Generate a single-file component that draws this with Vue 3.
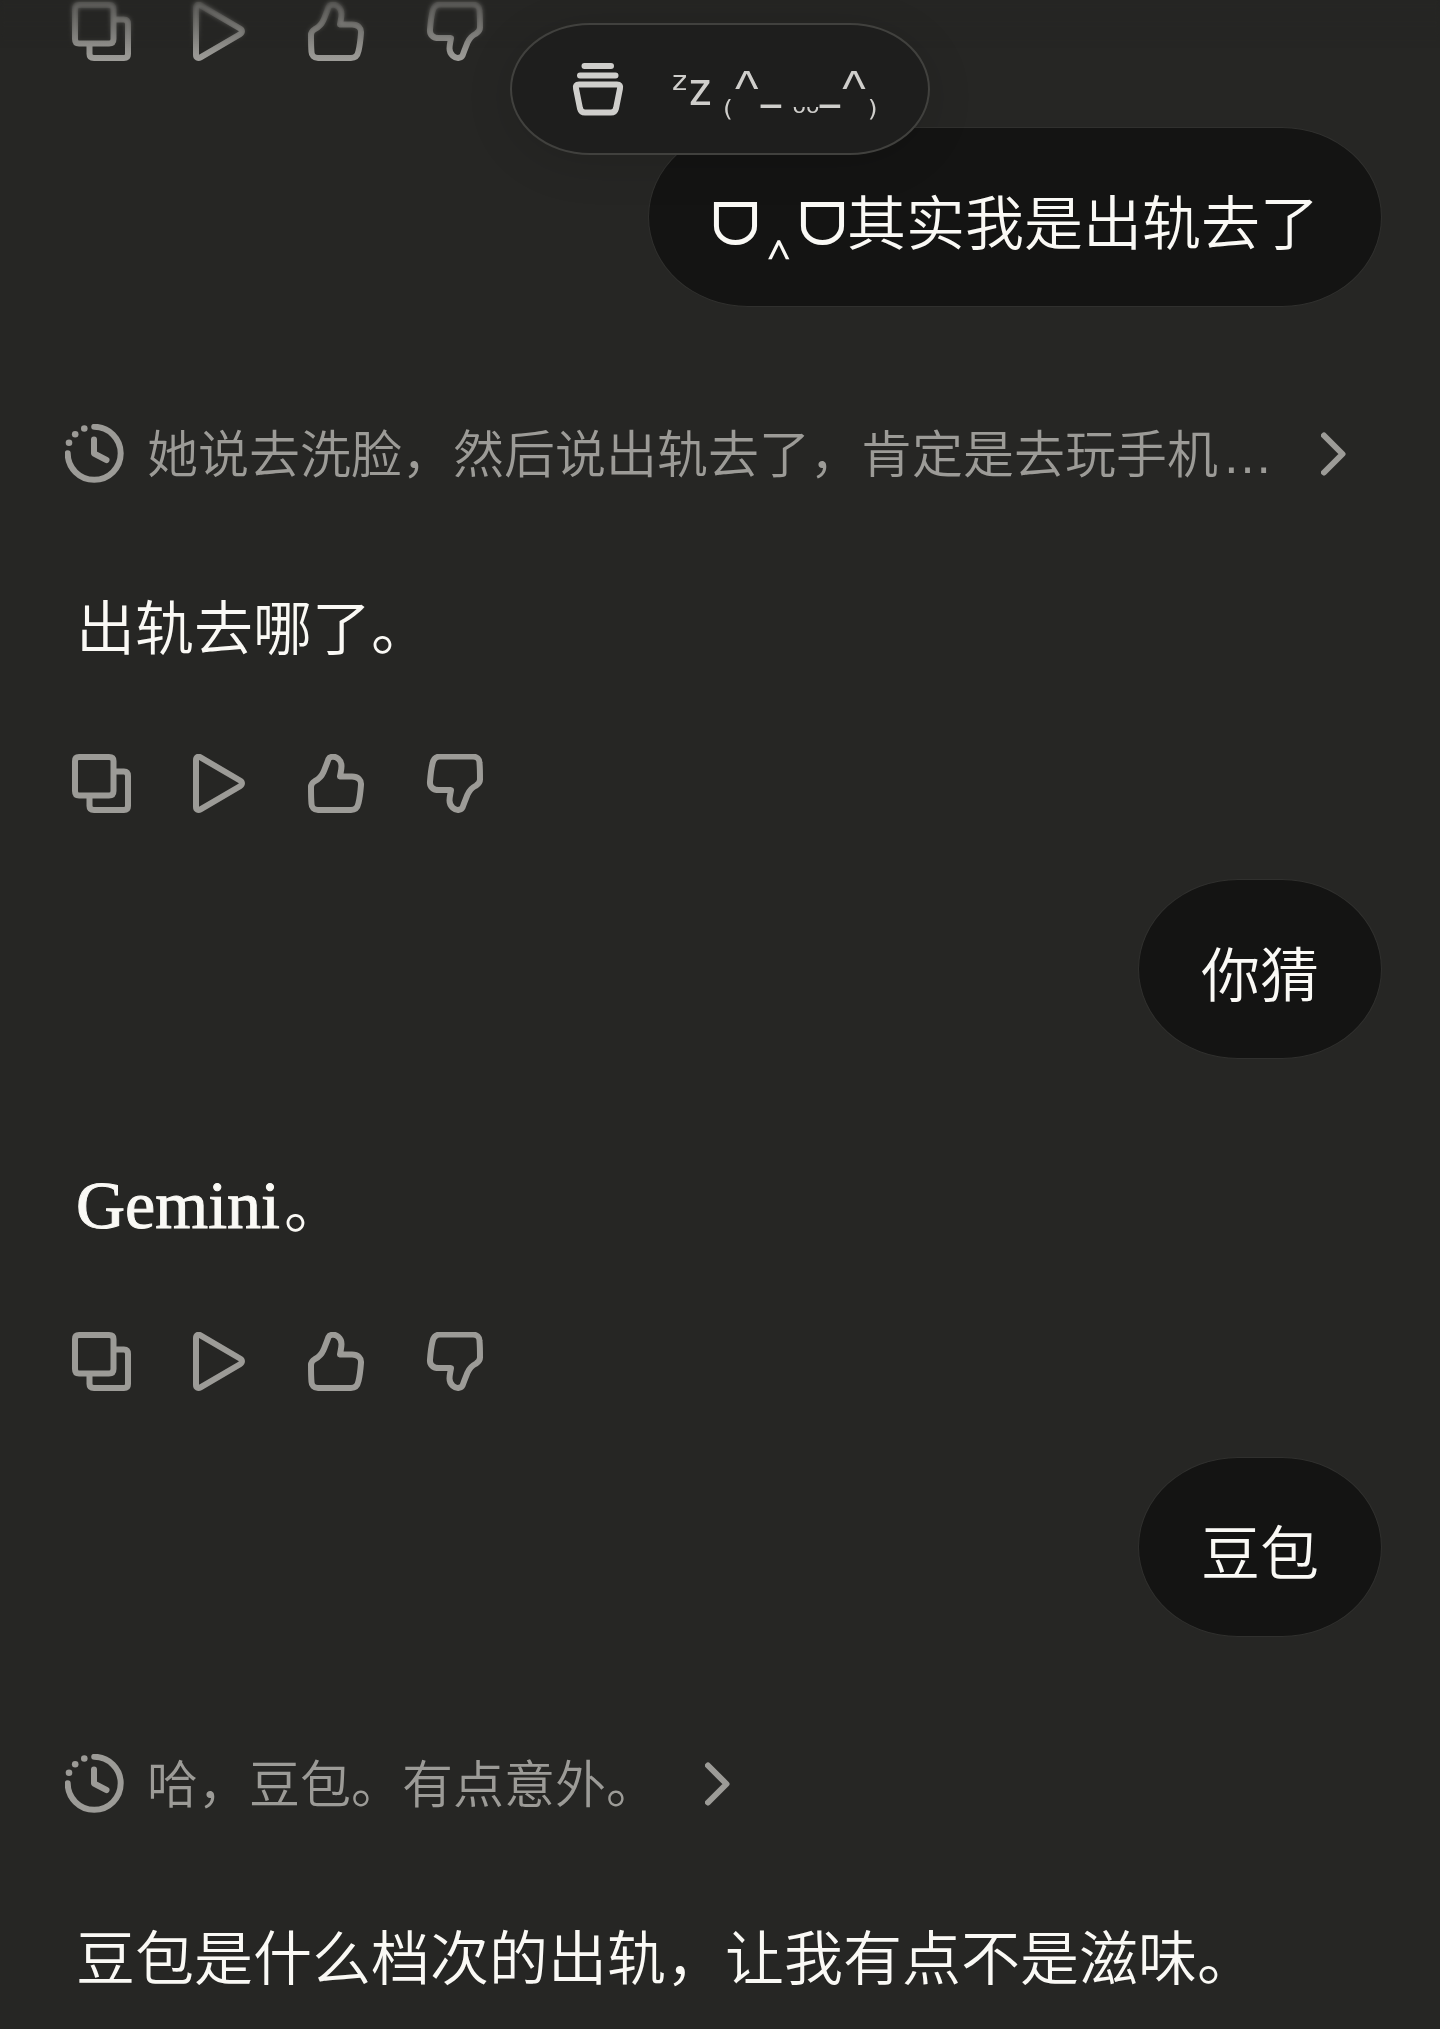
<script setup>
const icons = {
  copy: [
    'M7 3H37Q41.500 3 41.500 7V37Q41.500 41.500 37 41.500H7Q3 41.500 3 37V7Q3 3 7 3Z',
    'M43 17.500H52Q56 17.500 56 22V52Q56 56 52 56H22Q17.500 56 17.500 52V43',
  ],
  play: ['M6 6C6 3 8 2 10.500 3.400L50 26.500C52.600 28 52.600 30.600 50 32.200L10.500 55.400C8 56.800 6 55.500 6 53Z'],
  up: [
    'M24 2.800C28 2 33.500 6 33.500 12C33.500 16 32.500 19 32 22.500H44C50 22.500 53.500 26 53 31C52.600 36 52 43 50.500 49C49.500 54 47 56 43 56H10C6 56 3.500 53 3.500 50C3 44 3 38 3 33C3 30 4.500 28.500 7 27C11 25 13.500 22.500 15.500 18C17.500 13 19 9.500 20.500 5C21.200 3.500 22.500 3 24 2.800Z',
  ],
}

const actions = [
  { label: '复制', paths: icons.copy },
  { label: '朗读', paths: icons.play },
  { label: '赞', paths: icons.up },
  { label: '踩', paths: icons.up, flip: true },
]

const items = [
  { type: 'actions' },
  { type: 'user', eyes: true, text: '其实我是出轨去了' },
  { type: 'thought', text: '她说去洗脸，然后说出轨去了，肯定是去玩手机', more: true },
  { type: 'reply', text: '出轨去哪了。' },
  { type: 'actions' },
  { type: 'user', text: '你猜' },
  { type: 'reply', latin: 'Gemini', text: '。' },
  { type: 'actions' },
  { type: 'user', text: '豆包' },
  { type: 'thought', text: '哈，豆包。有点意外。' },
  { type: 'reply', text: '豆包是什么档次的出轨，让我有点不是滋味。' },
]
</script>

<template>
  <div class="app">
    <header class="topbar">
      <button class="title" type="button">
        <svg class="basket" viewBox="0 0 52 54" aria-hidden="true">
          <path d="M12.500 4H39M8 13.500H43.500M7 22.500H45Q49 22.500 48 26.500L44 46.500Q43 50.500 39 50.500H13Q9 50.500 8 46.500L4 26.500Q3 22.500 7 22.500Z" />
        </svg>
        <span class="face">ᶻz <span class="low">₍</span><span class="ear">^</span>_ <span class="mouth">ᴗᴗ</span>_<span class="ear">^</span><span class="low">₎</span></span>
      </button>
    </header>

    <main class="chat">
      <template v-for="(item, i) in items" :key="i">
        <div v-if="item.type === 'actions'" class="actions">
          <button v-for="a in actions" :key="a.label" type="button" class="action" :aria-label="a.label">
            <svg viewBox="0 0 60 60" aria-hidden="true">
              <g :transform="a.flip ? 'rotate(180 28.500 29.300)' : undefined">
                <path v-for="p in a.paths" :key="p" :d="p" />
              </g>
            </svg>
          </button>
        </div>

        <p v-else-if="item.type === 'user'" class="bubble">
          <span v-if="item.eyes" class="eyes">ᗜ<span class="nose">‸</span>ᗜ</span>{{ item.text }}
        </p>

        <button v-else-if="item.type === 'thought'" type="button" class="thought">
          <svg class="clock" viewBox="0 0 60 60" aria-hidden="true">
            <path d="M29.200 2.800A26.500 26.500 0 1 1 2.700 29.300M29 15.500V29.500L41.500 36" />
            <g class="dots">
              <circle cx="19.300" cy="4.500" r="3.300" />
              <circle cx="10.200" cy="10.200" r="3.300" />
              <circle cx="4" cy="18.800" r="3.300" />
            </g>
          </svg>
          <span class="summary">{{ item.text }}<span v-if="item.more" class="more">…</span></span>
          <svg class="chevron" viewBox="0 0 25 44" aria-hidden="true">
            <path d="M3 3.500L21.500 22L3 40.500" />
          </svg>
        </button>

        <p v-else class="reply"><span v-if="item.latin" class="latin">{{ item.latin }}</span>{{ item.text }}</p>
      </template>
    </main>
  </div>
</template>

<style>
body {
  margin: 0;
  background: #262624;
}
</style>

<style scoped>
.app {
  position: relative;
  background: #262624;
  color: #faf9f5;
  font-family: "Noto Sans CJK SC", sans-serif;
  font-weight: 350;
}

button {
  margin: 0;
  padding: 0;
  border: 0;
  background: none;
  color: inherit;
  font: inherit;
  cursor: pointer;
}

p {
  margin: 0;
}

svg {
  display: block;
  fill: none;
  stroke: currentColor;
  stroke-width: 6;
  stroke-linecap: round;
  stroke-linejoin: round;
}

.topbar {
  position: absolute;
  inset: 0 0 auto;
  z-index: 1;
  display: flex;
  justify-content: center;
  padding: 23px 0 24px;
  background: linear-gradient(rgba(38, 38, 36, 0.5), rgba(38, 38, 36, 0) 60px);
}

.topbar::before {
  content: "";
  position: absolute;
  inset: 0 0 auto;
  height: 48px;
  backdrop-filter: blur(2px);
  mask-image: linear-gradient(#000, transparent);
}

.title {
  position: relative;
  box-sizing: border-box;
  display: flex;
  align-items: center;
  gap: 48px;
  width: 420px;
  height: 132px;
  padding-left: 60px;
  border: 2px solid #41413e;
  border-radius: 80px / 66px;
  background: #1e1e1d;
  box-shadow: 0 8px 48px rgba(0, 0, 0, 0.12);
  color: #cfcecb;
}

.basket {
  flex: none;
  width: 52px;
  height: 54px;
}

.face {
  font-family: Roboto, "DejaVu Sans", sans-serif;
  font-size: 46px;
  font-weight: 400;
  line-height: 60px;
  white-space: pre;
}

.low,
.mouth {
  font-family: "DejaVu Sans", sans-serif;
  line-height: 0;
}

.low {
  font-size: 40px;
  vertical-align: -12px;
}

.ear {
  padding: 0 2px;
  font-family: "Liberation Sans", sans-serif;
  font-size: 50px;
  line-height: 0;
}

.mouth {
  font-size: 22px;
  vertical-align: -8px;
}

.chat {
  display: flex;
  flex-direction: column;
  align-items: flex-start;
  padding: 2px 58px 33px 65px;
}

.actions {
  display: flex;
  gap: 58px;
  padding-left: 7px;
  color: #9c9b97;
}

.action,
.action svg,
.clock {
  width: 60px;
  height: 60px;
}

.bubble {
  box-sizing: border-box;
  align-self: flex-end;
  margin-top: 65px;
  padding: 60px 62px 54px;
  border: 1px solid #30302e;
  border-radius: 100px / 90px;
  background: #141413;
  font-size: 59px;
  line-height: 64px;
}

.eyes,
.nose {
  font-family: "DejaVu Sans", sans-serif;
  line-height: 0;
}

.nose {
  margin: 0 7px;
}

.thought {
  display: flex;
  align-items: center;
  margin-top: 117px;
  color: #9c9b97;
}

.summary {
  margin: 0 48px 0 22px;
  padding-bottom: 6px;
  font-size: 51px;
  line-height: 54px;
  white-space: nowrap;
}

.more {
  padding-left: 4px;
  font-family: "Liberation Sans", sans-serif;
  line-height: 0;
}

.dots {
  fill: currentColor;
  stroke: none;
}

.chevron {
  width: 25px;
  height: 44px;
}

.reply {
  padding-left: 11px;
  font-size: 59px;
  line-height: 80px;
}

.bubble + .reply {
  margin-top: 104px;
}

.thought + .reply {
  margin-top: 101px;
}

.reply + .actions {
  margin-top: 89px;
}

.latin {
  margin-right: 4px;
  font-family: "Liberation Serif", serif;
  font-size: 68px;
  line-height: 0;
  -webkit-text-stroke: 1px currentColor;
}
</style>
